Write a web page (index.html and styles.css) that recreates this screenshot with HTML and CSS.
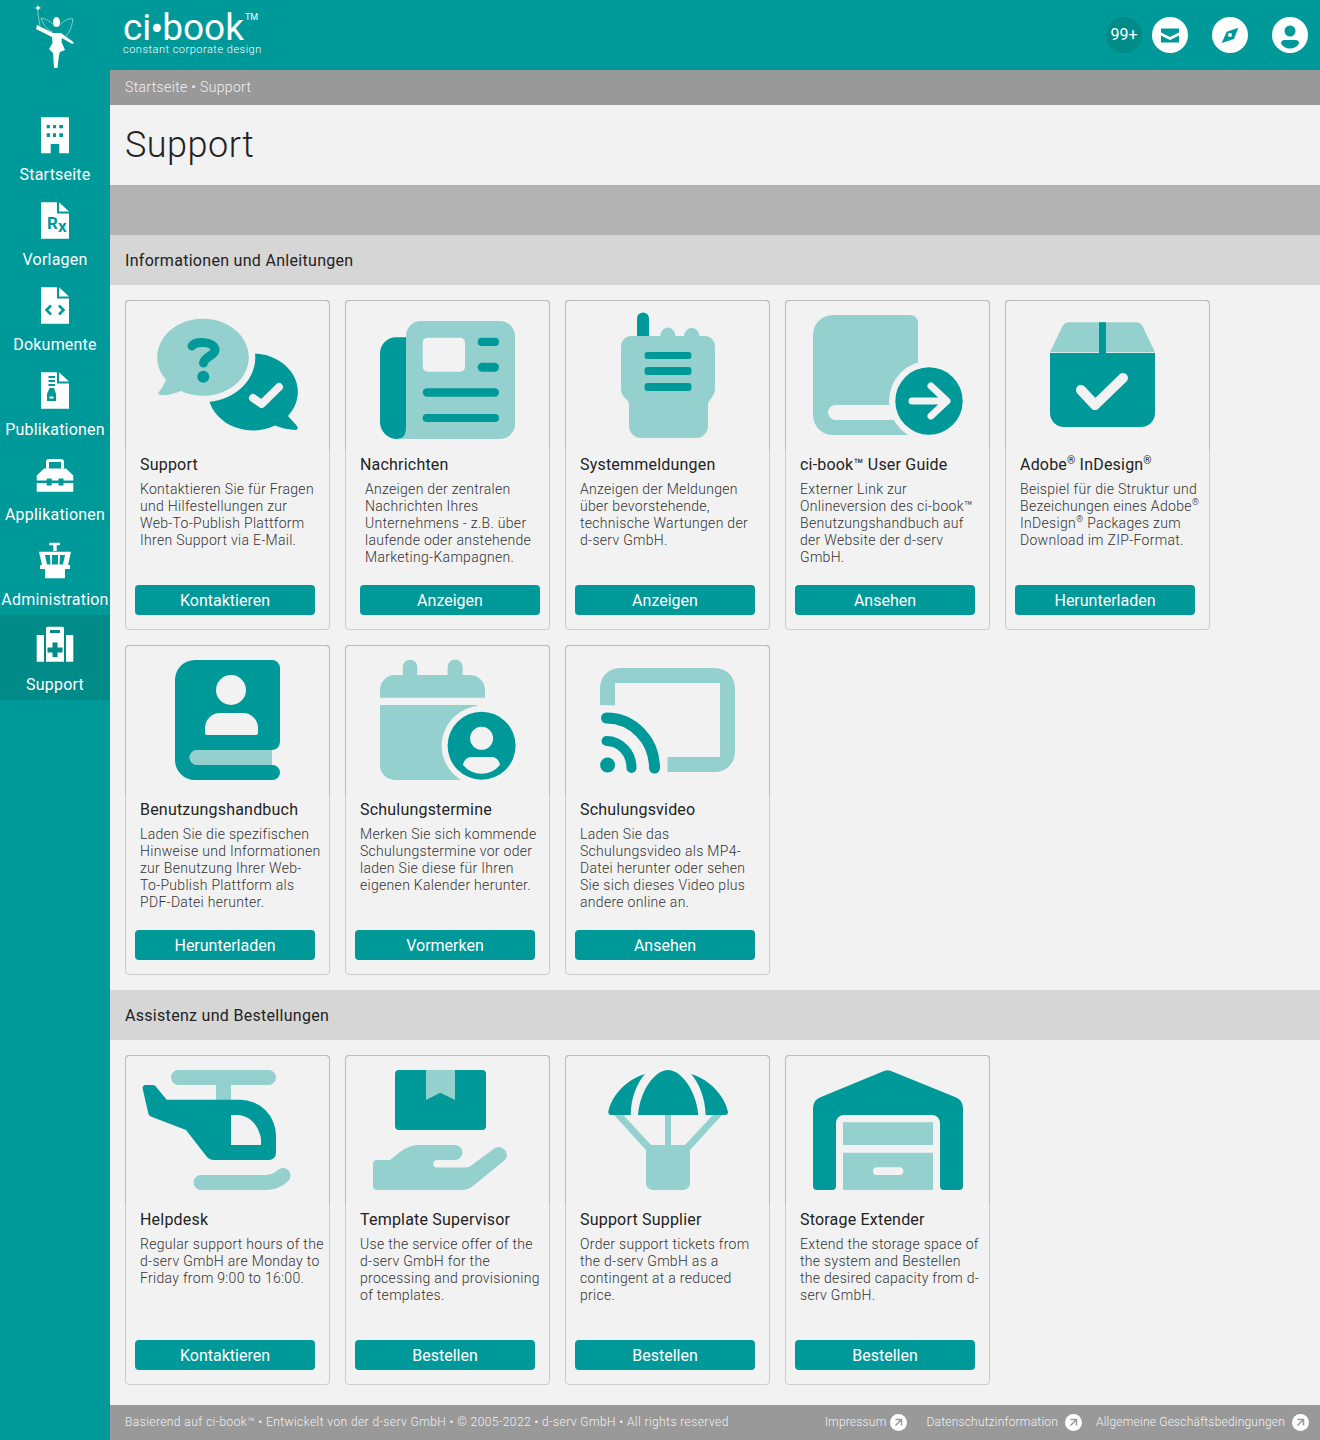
FILE: index.html
```html
<!DOCTYPE html>
<html lang="de">
  <head>
    <meta charset="UTF-8" />
    <title>Support</title>
    <link rel="stylesheet" href="styles.css">
  </head>
  <body>
    <div class="page">
      <!-- sidebar -->
      <aside class="sidebar">
        <div class="fairy">
          <svg width="110" height="70" viewBox="0 0 110 70">
            <path class="thin" d="M55 27C50 20 45 19 41 18M58 27C64 20 69 18 73 19C72 26 70 32 66 36M53 32C48 30 44 27 41 18"/>
            <path class="thin" d="M37.500 11L40 26"/>
            <path class="wht" d="M38 5l1 2 2 1-2 1-1 2-1-2-2-1 2-1z"/>
            <ellipse class="wht" cx="56.500" cy="22" rx="3.500" ry="5"/>
            <path class="wht" d="M37 25L53 33H61L72 41L74 43L72 44L62 38L61.500 42L65 50L60 52L59 55L57.500 68H54L53 53L49 49L52.500 43L52 37L36 29Z"/>
          </svg>
        </div>
        <nav class="nav">
          <a class="nav-item">
            <svg class="nav-icon" viewBox="0 0 40 40">
              <path class="wht" d="M6 2.300H34V38.300H24.300V29H15.700V38.300H6Z"/>
              <path class="teal" d="M11.700 10H15V13.300H11.700ZM18 10H21V13.300H18ZM24.300 10H28V13.300H24.300ZM11.700 18.300H15V22H11.700ZM18 18.300H21V22H18ZM24.300 18.300H28V22H24.300Z"/>
            </svg>
            <span>Startseite</span>
          </a>
          <a class="nav-item">
            <svg class="nav-icon" viewBox="0 0 40 40">
              <path class="wht" d="M6 2.300H22V13.500H34V38.700H6ZM24 2.300L34 11.500H24Z"/>
              <text class="rx" x="12" y="29">R<tspan dy="3">x</tspan></text>
            </svg>
            <span>Vorlagen</span>
          </a>
          <a class="nav-item">
            <svg class="nav-icon" viewBox="0 0 40 40">
              <path class="wht" d="M6 2.300H22V13.500H34V38.700H6ZM24 2.300L34 11.500H24Z"/>
              <path class="teal-line" d="M16 20.500L11.500 25L16 29.500M24 20.500L28.500 25L24 29.500"/>
            </svg>
            <span>Dokumente</span>
          </a>
          <a class="nav-item">
            <svg class="nav-icon" viewBox="0 0 40 40">
              <path class="wht" d="M6 2.300H22V13.500H34V38.700H6ZM24 2.300L34 11.500H24Z"/>
              <path class="teal" d="M13.500 6H20V8H13.500ZM13.500 10H20V12H13.500ZM13.500 14H20V16H13.500ZM14.500 18H19L21 24V31H12V24Z"/>
              <path class="wht" d="M14.500 26.500H18.500V28.500H14.500Z"/>
            </svg>
            <span>Publikationen</span>
          </a>
          <a class="nav-item">
            <svg class="nav-icon" viewBox="0 0 40 40">
              <path class="wht" d="M11 13.500V7a3 3 0 0 1 3-3H26a3 3 0 0 1 3 3V13.500H26V7H14V13.500Z"/>
              <path class="wht" d="M1.700 20.500L9 13.500H31L38.300 20.500V25.500H1.700ZM1.700 28H38.300V36.700H1.700Z"/>
              <path class="teal" d="M11.700 23.500H16.700V30.500H11.700ZM23.500 23.500H28.500V30.500H23.500Z"/>
            </svg>
            <span>Applikationen</span>
          </a>
          <a class="nav-item">
            <svg class="nav-icon" viewBox="0 0 40 40">
              <path class="wht" d="M14.300 2.700H25V5.300H21.700V11H18.300V5.300H14.300ZM4 11.700H36L33 25H35V29H30V38.300H10V29H5V25H7Z"/>
              <path class="teal" d="M10 15H15L15.500 24.500H12ZM17 15H23V24.500H17ZM25 15H30L28 24.500H24.500Z"/>
            </svg>
            <span>Administration</span>
          </a>
          <a class="nav-item active">
            <svg class="nav-icon" viewBox="0 0 40 40">
              <path class="wht" d="M1.700 10H9V36.700H1.700ZM31 10H38.300V36.700H31ZM12.500 1.700H27.500a1.500 1.500 0 0 1 1.500 1.500V36.700H11V3.200a1.500 1.500 0 0 1 1.500-1.500Z"/>
              <path class="dk-teal" d="M15 5H25V8H15ZM17.500 17.500H22.500V22.500H27.500V27.500H22.500V32H17.500V27.500H12.500V22.500H17.500Z"/>
            </svg>
            <span>Support</span>
          </a>
        </nav>
      </aside>

      <main class="main">
        <header class="topbar">
          <div class="brand">
            <div class="brand-name">ci<span class="brand-dot">•</span>book<sup>TM</sup></div>
            <div class="brand-sub">constant corporate design</div>
          </div>
          <div class="top-actions">
            <span class="count">99+</span>
            <span class="round-btn">
              <svg viewBox="0 0 36 36" width="36" height="36">
                <path class="teal" d="M9 11.500H27V15.500L18 20L9 15.500ZM9 18.500L18 23L27 18.500V25.500H9Z"/>
              </svg>
            </span>
            <span class="round-btn">
              <svg viewBox="0 0 36 36" width="36" height="36">
                <path class="teal" d="M9.700 26L14.700 14.700L26.300 10.700L22 22Z"/>
                <circle class="wht" cx="18" cy="18" r="2"/>
              </svg>
            </span>
            <span class="round-btn">
              <svg viewBox="0 0 36 36" width="36" height="36">
                <circle class="teal" cx="18" cy="14" r="5.500"/>
                <path class="teal" d="M12.500 23H23.500a3.500 3.500 0 0 1 3.500 3.500C25 30 22 31.500 18 31.500S11 30 9 26.500A3.500 3.500 0 0 1 12.500 23Z"/>
              </svg>
            </span>
          </div>
        </header>

        <div class="crumbs">Startseite • Support</div>
        <h1 class="page-title">Support</h1>
        <div class="filler"></div>

        <h2 class="section-head">Informationen und Anleitungen</h2>
        <section class="cards">
          <article class="card">
            <div class="card-art">
              <svg viewBox="1 1 203 149" width="203" height="149">
                <path class="dark" d="M128 53.500A45 38.500 0 0 1 163 116L172 126Q174 130 170 130Q158 129 150 125.500A45 38.500 0 0 1 84 100Z"/>
                <ellipse class="cut" cx="78.300" cy="57.300" rx="52" ry="45"/>
                <path class="light" d="M78.300 18.800A45.700 38.500 0 1 1 56 91Q44 96 35 95Q32 94 34 92Q38 87 41 80A45.700 38.500 0 0 1 78.300 18.800Z"/>
                <path class="dark-line q" d="M67 46C70 41 88 41 90 49C91 55 79 57 78.500 63"/>
                <circle class="dark" cx="78.300" cy="76.700" r="6"/>
                <path class="cut-line w8" d="M128 98L136.700 104L154 87"/>
              </svg>
            </div>
            <div class="card-body">
              <h3>Support</h3>
              <p>Kontaktieren Sie für Fragen<br>und Hilfestellungen zur<br>Web-To-Publish Plattform<br>Ihren Support via E-Mail.</p>
              <button>Kontaktieren</button>
            </div>
          </article>

          <article class="card shifted">
            <div class="card-art">
              <svg viewBox="1 1 203 149" width="203" height="149">
                <path class="dark" d="M61 37.300H51a16 16 0 0 0-16 16V122a17 17 0 0 0 17 17c6 0 9-4 9-10Z"/>
                <path class="light" d="M76 21H155a15 15 0 0 1 15 15V124a15 15 0 0 1-15 15H52c6 0 9-4 9-10V36a15 15 0 0 1 15-15Z"/>
                <rect class="cut" x="77.700" y="37.700" width="42.300" height="34" rx="5"/>
                <rect class="dark" x="132.700" y="37.700" width="21.300" height="8.300" rx="4"/>
                <rect class="dark" x="132.700" y="62.700" width="21.300" height="9" rx="4.500"/>
                <rect class="dark" x="77.700" y="88.300" width="76.300" height="8.400" rx="4.200"/>
                <rect class="dark" x="77.700" y="114" width="76.300" height="8" rx="4"/>
              </svg>
            </div>
            <div class="card-body">
              <h3>Nachrichten</h3>
              <p>Anzeigen der zentralen<br>Nachrichten Ihres<br>Unternehmens - z.B. über<br>laufende oder anstehende<br>Marketing-Kampagnen.</p>
              <button>Anzeigen</button>
            </div>
          </article>

          <article class="card">
            <div class="card-art">
              <svg viewBox="1 1 203 149" width="203" height="149">
                <path class="dark" d="M72 37V18.500a6 6 0 0 1 12 0V37Z"/>
                <path class="light" d="M95 37a7.500 9 0 0 1 15.700 0ZM119 37a7.500 9 0 0 1 15.500 0Z"/>
                <path class="light" d="M66 36H140a10 10 0 0 1 10 10V90a12 12 0 0 1-3 7l-2 3a6 6 0 0 0-2 5V126a12 12 0 0 1-12 12H76a12 12 0 0 1-12-12V105a6 6 0 0 0-2-5l-3-3a12 12 0 0 1-3-7V46a10 10 0 0 1 10-10Z"/>
                <rect class="dark" x="79.600" y="52" width="46.900" height="7" rx="3"/>
                <rect class="dark" x="79.600" y="67" width="46.900" height="8" rx="3"/>
                <rect class="dark" x="79.600" y="83" width="46.900" height="8" rx="3"/>
              </svg>
            </div>
            <div class="card-body">
              <h3>Systemmeldungen</h3>
              <p>Anzeigen der Meldungen<br>über bevorstehende,<br>technische Wartungen der<br>d-serv GmbH.</p>
              <button>Anzeigen</button>
            </div>
          </article>

          <article class="card">
            <div class="card-art">
              <svg viewBox="1 1 203 149" width="203" height="149">
                <path class="light" d="M48 15H125a8 8 0 0 1 8 8V135H48a20 20 0 0 1-20-20V35a20 20 0 0 1 20-20Z"/>
                <rect class="cut" x="43" y="105" width="80" height="15" rx="7.500"/>
                <circle class="cut" cx="144" cy="101" r="40"/>
                <circle class="dark" cx="144" cy="101" r="33.700"/>
                <path class="cut-line w7" d="M127 101H161M146 86L162 101L146 116"/>
              </svg>
            </div>
            <div class="card-body">
              <h3>ci-book™ User Guide</h3>
              <p>Externer Link zur<br>Onlineversion des ci-book™<br>Benutzungshandbuch auf<br>der Website der d-serv<br>GmbH.</p>
              <button>Ansehen</button>
            </div>
          </article>

          <article class="card">
            <div class="card-art">
              <svg viewBox="1 1 203 149" width="203" height="149">
                <path class="light" d="M65 22.300H130a8 8 0 0 1 8 5L150 52.300H45L57 27.300a8 8 0 0 1 8-5Z"/>
                <path class="dark" d="M94 22.300H101V53H136V53H150V113a14 14 0 0 1-14 14H59a14 14 0 0 1-14-14V53H94Z"/>
                <path class="cut-line w9" d="M76 90L90 105L118 78"/>
              </svg>
            </div>
            <div class="card-body">
              <h3>Adobe<sup class="reg">®</sup> InDesign<sup class="reg">®</sup></h3>
              <p>Beispiel für die Struktur und<br>Bezeichungen eines Adobe<sup class="reg">®</sup><br>InDesign<sup class="reg">®</sup> Packages zum<br>Download im ZIP-Format.</p>
              <button>Herunterladen</button>
            </div>
          </article>

          <article class="card">
            <div class="card-art">
              <svg viewBox="1 1 203 149" width="203" height="149">
                <path class="light" d="M72 105H147V120H72a7.500 7.500 0 0 1 0-15Z"/>
                <path class="dark" d="M70 15H147a8 8 0 0 1 8 8V97a8 8 0 0 1-8 8H72a7.500 7.500 0 0 0 0 15H147.500a7.500 7.500 0 0 1 0 15H70a20 20 0 0 1-20-20V35a20 20 0 0 1 20-20Z"/>
                <circle class="cut" cx="106" cy="45" r="15"/>
                <path class="cut" d="M95 68H118a15 15 0 0 1 15 15V88a2 2 0 0 1-2 2H82a2 2 0 0 1-2-2V83a15 15 0 0 1 15-15Z"/>
              </svg>
            </div>
            <div class="card-body">
              <h3>Benutzungshandbuch</h3>
              <p>Laden Sie die spezifischen<br>Hinweise und Informationen<br>zur Benutzung Ihrer Web-<br>To-Publish Plattform als<br>PDF-Datei herunter.</p>
              <button>Herunterladen</button>
            </div>
          </article>

          <article class="card">
            <div class="card-art">
              <svg viewBox="1 1 203 149" width="203" height="149">
                <path class="light" d="M50 30H57.800V22a7 7 0 0 1 14.500 0V30H102.600V22a7.500 7.500 0 0 1 15 0V30H125a15 15 0 0 1 15 15V52.700H35V45a15 15 0 0 1 15-15Z"/>
                <path class="light" d="M35 60H132V135H50a15 15 0 0 1-15-15Z"/>
                <circle class="cut" cx="136.600" cy="100.700" r="40"/>
                <circle class="dark" cx="136.600" cy="100.700" r="34"/>
                <circle class="cut" cx="136.600" cy="93.300" r="11.500"/>
                <path class="cut" d="M125 112H148a10 10 0 0 1 7 8A24 24 0 0 1 118 120A10 10 0 0 1 125 112Z"/>
              </svg>
            </div>
            <div class="card-body">
              <h3>Schulungstermine</h3>
              <p>Merken Sie sich kommende<br>Schulungstermine vor oder<br>laden Sie diese für Ihren<br>eigenen Kalender herunter.</p>
              <button>Vormerken</button>
            </div>
          </article>

          <article class="card">
            <div class="card-art">
              <svg viewBox="1 1 203 149" width="203" height="149">
                <path class="light" d="M35 60V43a20 20 0 0 1 20-20H150a20 20 0 0 1 20 20V107a20 20 0 0 1-20 20H102.500V112H155V38H50V60.500Z"/>
                <circle class="dark" cx="42.600" cy="120" r="7.500"/>
                <path class="dark-line w12" d="M41.500 73A48 50 0 0 1 89.500 123"/>
                <path class="dark-line w11" d="M41.500 96A25 27 0 0 1 66.500 123"/>
              </svg>
            </div>
            <div class="card-body">
              <h3>Schulungsvideo</h3>
              <p>Laden Sie das<br>Schulungsvideo als MP4-<br>Datei herunter oder sehen<br>Sie sich dieses Video plus<br>andere online an.</p>
              <button>Ansehen</button>
            </div>
          </article>
        </section>

        <h2 class="section-head">Assistenz und Bestellungen</h2>
        <section class="cards">
          <article class="card">
            <div class="card-art">
              <svg viewBox="1 1 203 149" width="203" height="149">
                <rect class="light" x="46" y="15" width="105" height="15" rx="7.500"/>
                <rect class="light" x="91" y="30" width="15" height="16"/>
                <path class="light-line" d="M76 127.500H140a25 25 0 0 0 18-7"/>
                <path class="dark" d="M20 30H28a5 5 0 0 1 4 3L41.700 44.700H115A36 36 0 0 1 151 81V98a7 7 0 0 1-7 7H88a8 8 0 0 1-6-3L61 75L27 62a6 6 0 0 1-4-5L17.500 33a3 3 0 0 1 2.500-3Z"/>
                <path class="cut" d="M106 60H112A24 30 0 0 1 136 84V90H106Z"/>
              </svg>
            </div>
            <div class="card-body">
              <h3>Helpdesk</h3>
              <p>Regular support hours of the<br>d-serv GmbH are Monday to<br>Friday from 9:00 to 16:00.</p>
              <button>Kontaktieren</button>
            </div>
          </article>

          <article class="card">
            <div class="card-art">
              <svg viewBox="1 1 203 149" width="203" height="149">
                <path class="dark" d="M54 15H137a4 4 0 0 1 4 4V71a4 4 0 0 1-4 4H54a4 4 0 0 1-4-4V19a4 4 0 0 1 4-4Z"/>
                <path class="light" d="M81 15H110V45L95.300 37.700L81 45Z"/>
                <path class="light" d="M32 105H45L55 97Q65 90 73 90H110a7.500 7.500 0 0 1 0 15H92a3.600 3.600 0 0 0 0 7.500H120q4 0 7-2.500L150 93a8 8 0 0 1 10 12L128 131q-5 4-12 4H32a4 4 0 0 1-4-4V109a4 4 0 0 1 4-4Z"/>
              </svg>
            </div>
            <div class="card-body">
              <h3>Template Supervisor</h3>
              <p>Use the service offer of the<br>d-serv GmbH for the<br>processing and provisioning<br>of templates.</p>
              <button>Bestellen</button>
            </div>
          </article>

          <article class="card">
            <div class="card-art">
              <svg viewBox="1 1 203 149" width="203" height="149">
                <path class="dark" d="M73 60C75 35 90 15 103 15C116 15 131 35 133.300 60Z"/>
                <path class="dark" d="M80 19C60 25 46 42 43.300 57a3 3 0 0 0 3 3H65.700C66 42 72 28 80 19Z"/>
                <path class="dark" d="M126 19C146 25 160 42 163 57a3 3 0 0 1-3 3H140.700C140 42 134 28 126 19Z"/>
                <path class="light" d="M100 60H106V90H120L148 60H157L125 95V128a7 7 0 0 1-7 7H88a7 7 0 0 1-7-7V95L49 60H58.300L86 90H100Z"/>
              </svg>
            </div>
            <div class="card-body">
              <h3>Support Supplier</h3>
              <p>Order support tickets from<br>the d-serv GmbH as a<br>contingent at a reduced<br>price.</p>
              <button>Bestellen</button>
            </div>
          </article>

          <article class="card">
            <div class="card-art">
              <svg viewBox="1 1 203 149" width="203" height="149">
                <path class="dark" d="M99 16a9 9 0 0 1 7 0L170 42a12 12 0 0 1 8 11V131a4 4 0 0 1-4 4H159a4 4 0 0 1-4-4V68a8 8 0 0 0-8-8H59a8 8 0 0 0-8 8V131a4 4 0 0 1-4 4H32a4 4 0 0 1-4-4V53a12 12 0 0 1 8-11Z"/>
                <path class="light" d="M58 67.300H148V90H58ZM58 97.700H148V135H58Z"/>
                <rect class="cut" x="88" y="112.300" width="30.300" height="7.700" rx="3.800"/>
              </svg>
            </div>
            <div class="card-body">
              <h3>Storage Extender</h3>
              <p>Extend the storage space of<br>the system and Bestellen<br>the desired capacity from d-<br>serv GmbH.</p>
              <button>Bestellen</button>
            </div>
          </article>
        </section>

        <footer class="footer">
          <div>Basierend auf ci-book™ • Entwickelt von der d-serv GmbH • © 2005-2022 • d-serv GmbH • All rights reserved</div>
          <div class="footer-links">
            <a class="footer-link tight">Impressum
              <svg viewBox="0 0 17 17" width="17" height="17"><circle class="wht" cx="8.500" cy="8.500" r="8.500"/><path class="grey-line" d="M5.500 5.500H11.500V11.500M11 6L5.500 11.500"/></svg>
            </a>
            <a class="footer-link">Datenschutzinformation
              <svg viewBox="0 0 17 17" width="17" height="17"><circle class="wht" cx="8.500" cy="8.500" r="8.500"/><path class="grey-line" d="M5.500 5.500H11.500V11.500M11 6L5.500 11.500"/></svg>
            </a>
            <a class="footer-link">Allgemeine Geschäftsbedingungen
              <svg viewBox="0 0 17 17" width="17" height="17"><circle class="wht" cx="8.500" cy="8.500" r="8.500"/><path class="grey-line" d="M5.500 5.500H11.500V11.500M11 6L5.500 11.500"/></svg>
            </a>
          </div>
        </footer>
      </main>
    </div>
  </body>
</html>
```

FILE: styles.css
```css
body {
  margin: 0;
  font-family: Roboto, "Liberation Sans", sans-serif;
  background-color: #f2f2f2;
  color: #222;
}
.page {
  display: flex;
  width: 1320px;
  height: 1440px;
  overflow: hidden;
}

/* svg colours */
.wht { fill: #fff; }
.teal { fill: #009999; }
.dk-teal { fill: #008a88; }
.dark { fill: #009999; }
.light { fill: #94d0ce; }
.cut { fill: #f2f2f2; }
.thin { fill: none; stroke: #fff; stroke-width: 0.5; }
.teal-line { fill: none; stroke: #009999; stroke-width: 2.5; }
.dark-line { fill: none; stroke: #009999; stroke-linecap: round; }
.light-line { fill: none; stroke: #94d0ce; stroke-width: 15; stroke-linecap: round; }
.cut-line { fill: none; stroke: #f2f2f2; stroke-linecap: round; stroke-linejoin: round; }
.grey-line { fill: none; stroke: #999; stroke-width: 1.5; }
.q { stroke-width: 9; }
.w7 { stroke-width: 7; }
.w8 { stroke-width: 8; }
.w9 { stroke-width: 10; }
.w11 { stroke-width: 10; }
.w12 { stroke-width: 11; }
.rx { fill: #009999; font-family: Roboto, sans-serif; font-size: 17px; font-weight: 700; }

/* sidebar */
.sidebar {
  flex: 0 0 110px;
  background-color: #009999;
}
.fairy {
  height: 105px;
}
.fairy svg {
  display: block;
}
.nav-item {
  display: flex;
  flex-direction: column;
  align-items: center;
  height: 85px;
  box-sizing: border-box;
  padding-top: 10px;
  color: #fff;
  font-size: 16px;
  letter-spacing: 0.2px;
  line-height: 20px;
  white-space: nowrap;
}
.nav-item.active {
  background-color: #008a88;
}
.nav-icon {
  width: 40px;
  height: 40px;
  margin-bottom: 10px;
  flex: none;
}

/* top */
.main {
  flex: 1;
  display: flex;
  flex-direction: column;
  min-width: 0;
}
.topbar {
  height: 70px;
  flex: none;
  background-color: #009999;
  display: flex;
  justify-content: space-between;
  align-items: center;
  padding: 0 12px 0 13px;
  color: #fff;
}
.brand {
  align-self: flex-start;
  padding-top: 13px;
}
.brand-name {
  font-size: 37px;
  line-height: 30px;
  height: 30px;
  white-space: nowrap;
}
.brand-dot {
  font-size: 38px;
  line-height: 0;
  margin: 0 -1px;
  vertical-align: -2px;
}
.brand-name sup {
  font-size: 9px;
  vertical-align: 20px;
  line-height: 0;
  margin-left: 1px;
}
.brand-sub {
  font-size: 11px;
  font-weight: 300;
  letter-spacing: 0.5px;
  line-height: 14px;
}
.top-actions {
  display: flex;
  align-items: center;
}
.count {
  width: 36px;
  height: 36px;
  line-height: 36px;
  border-radius: 50%;
  background-color: #008a88;
  text-align: center;
  font-size: 16px;
  margin-right: 10px;
}
.round-btn {
  width: 36px;
  height: 36px;
  border-radius: 50%;
  background-color: #fff;
  margin-right: 24px;
}
.round-btn:last-child {
  margin-right: 0;
}
.round-btn svg {
  display: block;
}

.crumbs {
  height: 35px;
  line-height: 35px;
  flex: none;
  padding-left: 15px;
  background-color: #999;
  color: #f2f2f2;
  font-size: 14px;
  font-weight: 300;
  letter-spacing: 0.35px;
}
.page-title {
  margin: 0;
  height: 80px;
  line-height: 80px;
  flex: none;
  padding-left: 15px;
  font-size: 36px;
  font-weight: 300;
  letter-spacing: 0.5px;
}
.filler {
  height: 50px;
  flex: none;
  background-color: #b3b3b3;
}
.section-head {
  margin: 0;
  height: 50px;
  line-height: 51px;
  flex: none;
  padding-left: 15px;
  background-color: #d6d6d6;
  font-size: 16px;
  font-weight: 400;
  letter-spacing: 0.3px;
}

/* cards */
.cards {
  display: flex;
  flex-wrap: wrap;
  gap: 15px;
  padding: 15px;
}
.card {
  width: 205px;
  height: 330px;
  box-sizing: border-box;
  border: 1px solid #ccc;
  border-radius: 4px;
  display: flex;
  flex-direction: column;
}
.card-art {
  height: 150px;
  box-sizing: border-box;
  margin: -1px -1px 0;
  border: 1px solid #bbb;
  border-bottom: none;
  border-radius: 4px 4px 0 0;
  flex: none;
}
.card-art svg {
  display: block;
}
.card-body {
  flex: 1;
  display: flex;
  flex-direction: column;
  padding: 5px 0 14px 14px;
  white-space: nowrap;
}
.card h3 {
  margin: 0 0 6px;
  font-size: 16px;
  font-weight: 400;
  line-height: 20px;
  letter-spacing: 0.2px;
}
.card p {
  margin: 0;
  font-size: 14px;
  font-weight: 300;
  line-height: 17px;
  letter-spacing: 0.3px;
  color: #333;
}
.reg {
  font-size: 0.65em;
  line-height: 0;
}
.card button {
  margin: auto 0 0 -5px;
  width: 180px;
  height: 30px;
  padding: 0;
  border: none;
  border-radius: 4px;
  background-color: #009999;
  color: #fff;
  font-family: inherit;
  font-size: 16px;
  cursor: pointer;
}
.card.shifted p {
  margin-left: 5px;
}
.card.shifted button {
  margin-left: 0;
}

/* footer */
.footer {
  margin-top: auto;
  height: 35px;
  flex: none;
  box-sizing: border-box;
  padding: 0 11px 1px 15px;
  background-color: #999;
  color: #f2f2f2;
  font-size: 12px;
  font-weight: 300;
  letter-spacing: 0.42px;
  display: flex;
  justify-content: space-between;
  align-items: center;
}
.footer-links {
  display: flex;
  gap: 14px;
  letter-spacing: 0.2px;
}
.footer-link {
  display: flex;
  align-items: center;
  gap: 7px;
}
.footer-link.tight {
  gap: 4px;
  margin-right: 5px;
}
```
